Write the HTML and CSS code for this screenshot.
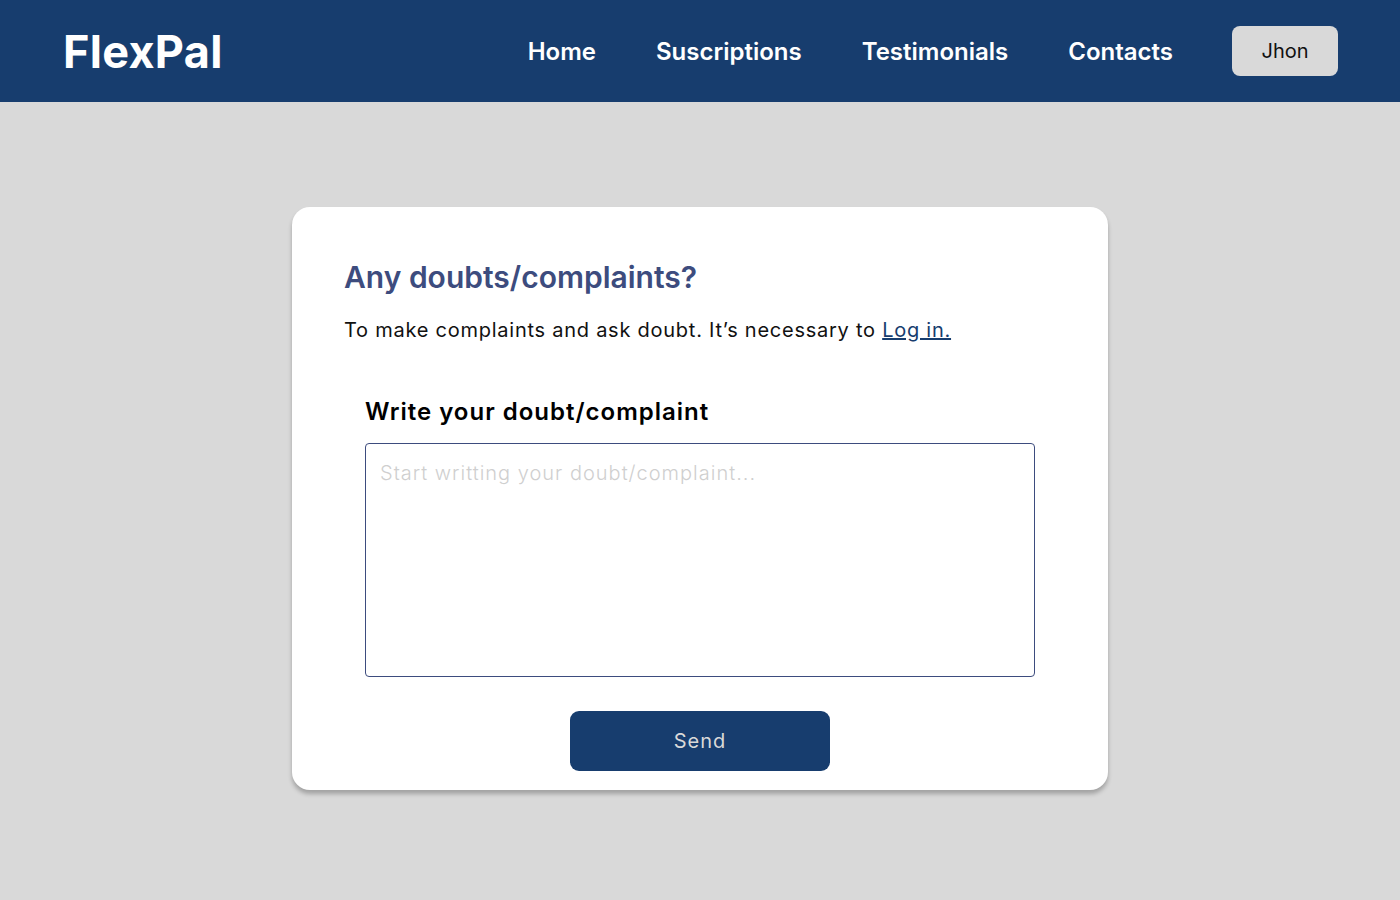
FILE: index.html
```html
<!DOCTYPE html>
<html lang="en">

<head>
    <meta charset="UTF-8">
    <meta name="viewport" content="width=device-width, initial-scale=1.0">
    <title>FlexPal - Doubts and complaints</title>
    <link rel="stylesheet" href="styles.css">
</head>

<body>

    <header class="top-bar">
        <div class="logo">FlexPal</div>
        <nav class="nav-links">
            <a href="#">Home</a>
            <a href="#">Suscriptions</a>
            <a href="#">Testimonials</a>
            <a href="#">Contacts</a>
        </nav>
        <button class="user-btn">Jhon</button>
    </header>

    <main class="page">
        <section class="card">
            <h1>Any doubts/complaints?</h1>
            <p class="notice">To make complaints and ask doubt. It’s necessary to <a href="#">Log in.</a></p>

            <form class="complaint-form" onsubmit="return false;">
                <label for="complaintText">Write your doubt/complaint</label>
                <textarea id="complaintText" placeholder="Start writting your doubt/complaint..."></textarea>
                <button type="submit" class="send-btn">Send</button>
            </form>
        </section>
    </main>

</body>

</html>
```

FILE: styles.css
```css
* {
    box-sizing: border-box;
}

body {
    font-family: 'Inter', 'Liberation Sans', sans-serif;
    margin: 0;
    padding: 0;
    background-color: #d9d9d9;
    min-height: 100vh;
}

.top-bar {
    background-color: #173d6e;
    height: 102px;
    display: flex;
    align-items: center;
    padding: 0 62px 0 63px;
}

.logo {
    color: white;
    font-size: 45px;
    font-weight: 700;
    letter-spacing: 0.3px;
    margin-right: auto;
}

.nav-links {
    display: flex;
    gap: 60px;
    margin-right: 59px;
}

.nav-links a {
    color: white;
    text-decoration: none;
    font-size: 24px;
    font-weight: 600;
}

.user-btn {
    width: 106px;
    height: 50px;
    background-color: #d9d9d9;
    border: none;
    border-radius: 8px;
    font-family: inherit;
    font-size: 20px;
    color: #111;
    cursor: pointer;
}

.page {
    display: flex;
    justify-content: center;
    padding-top: 105px;
}

.card {
    width: 816px;
    background-color: white;
    border-radius: 18px;
    box-shadow: 0px 4px 4px rgba(0, 0, 0, 0.25);
    padding: 52px 52px 19px;
}

.card h1 {
    margin: 0;
    font-size: 30px;
    font-weight: 600;
    color: #3d4c7e;
}

.notice {
    margin: 23px 0 0;
    font-size: 20px;
    letter-spacing: 0.75px;
    color: #111;
}

.notice a {
    color: #173d6e;
}

.complaint-form {
    display: flex;
    flex-direction: column;
    align-items: center;
    margin: 55px 21px 0;
}

.complaint-form label {
    align-self: flex-start;
    font-size: 24px;
    font-weight: 600;
    letter-spacing: 1px;
    color: #000;
}

.complaint-form textarea {
    width: 100%;
    height: 234px;
    margin-top: 17px;
    padding: 17px 14px;
    border: 1px solid #3d4c7e;
    border-radius: 4px;
    font-family: inherit;
    font-size: 20px;
    font-weight: 300;
    letter-spacing: 1px;
    resize: none;
    outline: none;
}

.complaint-form textarea::placeholder {
    color: #cfcfcf;
}

.send-btn {
    width: 260px;
    height: 60px;
    margin-top: 34px;
    background-color: #173d6e;
    border: none;
    border-radius: 9px;
    color: #d9d9d9;
    font-family: inherit;
    font-size: 20px;
    letter-spacing: 1px;
    cursor: pointer;
}
```
